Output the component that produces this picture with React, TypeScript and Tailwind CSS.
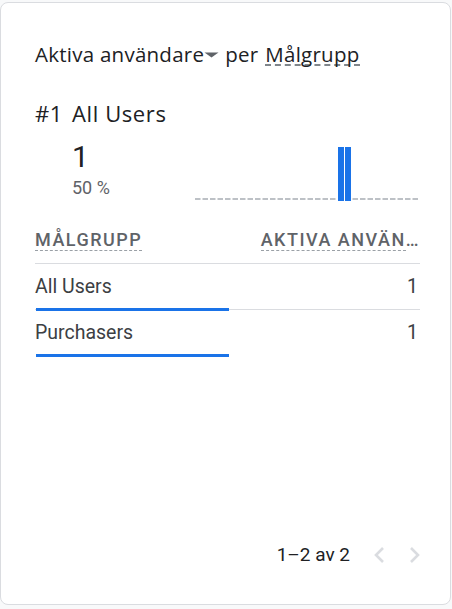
import React from "react";

const rows = [
  { name: "All Users", value: 1 },
  { name: "Purchasers", value: 1 },
];

// little bar chart with a dashed baseline
const Sparkline: React.FC = () => {
  const dashes = Array.from({ length: 30 }, (_, i) => i * 7.5).filter((x) => x < 139 || x > 155);
  return (
    <svg width="224" height="56" viewBox="0 0 224 56" className="block shrink-0">
      {dashes.map((x) => (
        <rect key={x} x={x} y={53} width={5.5} height={2} fill="#bdc1c6" />
      ))}
      <rect x={143} y={2} width={6} height={54} fill="#1a73e8" />
      <rect x={150} y={2} width={6} height={54} fill="#1a73e8" />
    </svg>
  );
};

const Chevron: React.FC<{ dir: "left" | "right" }> = ({ dir }) => (
  <svg width="12" height="18" viewBox="0 0 12 18" fill="none" stroke="#dadce0" strokeWidth="2.6">
    <path d={dir === "left" ? "M10 2L3 9l7 7" : "M2 2l7 7-7 7"} />
  </svg>
);

export default function App() {
  return (
    <div className="h-[609px] w-[452px] bg-[#f8f9fa] pt-[2px] font-['Roboto',sans-serif] text-[#202124]">
      <div className="flex h-[603px] w-[451px] flex-col rounded-lg border border-[#dadce0] bg-white pl-[34px] pr-[30px]">
        <div className="mt-[37px] flex h-[28px] items-center text-[20.5px] tracking-[0.25px] font-['Open_Sans',sans-serif]">
          <span>Aktiva användare</span>
          <svg width="15" height="6" viewBox="0 0 15 6" className="mt-[2px] shrink-0">
            <path d="M0.5 0.5h14l-7 5z" fill="#5f6368" />
          </svg>
          <span className="ml-[6px]">per</span>
          <span className="ml-[7px] h-[24px] border-b-2 border-dashed border-[#80868b] leading-[24px]">Målgrupp</span>
        </div>

        <div className="mt-[30px] flex h-[30px] items-center text-[22px] font-medium tracking-[0.6px] font-['Open_Sans',sans-serif]">
          <span>#1</span>
          <span className="ml-[9px]">All Users</span>
        </div>

        <div className="mt-[12px] flex items-start">
          <div className="ml-[37px] w-[123px] shrink-0">
            <div className="text-[30px] leading-[34px]">1</div>
            <div className="mt-[3px] text-[18px] leading-[22px] text-[#5f6368]">50 %</div>
          </div>
          <div className="mt-[5px]">
            <Sparkline />
          </div>
        </div>

        <div className="mt-[29px] flex items-center justify-between text-[18px] font-medium uppercase tracking-[1.5px] text-[#5f6368]">
          <span className="h-[21px] border-b border-dashed border-[#9aa0a6] leading-[20px]">Målgrupp</span>
          <span className="flex">
            <span className="h-[21px] border-b border-dashed border-[#9aa0a6] leading-[20px]">Aktiva använ</span>
            <span className="leading-[20px]">…</span>
          </span>
        </div>

        <div className="mt-[12px] border-t border-[#dadce0]">
          {rows.map((r, i) => (
            <div
              key={r.name}
              className={`relative flex h-[46px] items-center justify-between text-[19.5px] text-[#3c4043] ${i === 0 ? "border-b border-[#dadce0]" : ""}`}
            >
              <span>{r.name}</span>
              <span className="pr-[2px]">{r.value}</span>
              <div className={`absolute left-[1px] h-[3px] w-[193px] bg-[#1a73e8] ${i === 0 ? "bottom-[-2px]" : "bottom-[-1px]"}`} />
            </div>
          ))}
        </div>

        <div className="mt-auto mb-[37px] -mr-[1px] flex h-[24px] items-center justify-end">
          <span className="text-[19px] text-[#202124]">1–2 av 2</span>
          <div className="ml-[23px] flex items-center gap-[24px]">
            <Chevron dir="left" />
            <Chevron dir="right" />
          </div>
        </div>
      </div>
    </div>
  );
}
